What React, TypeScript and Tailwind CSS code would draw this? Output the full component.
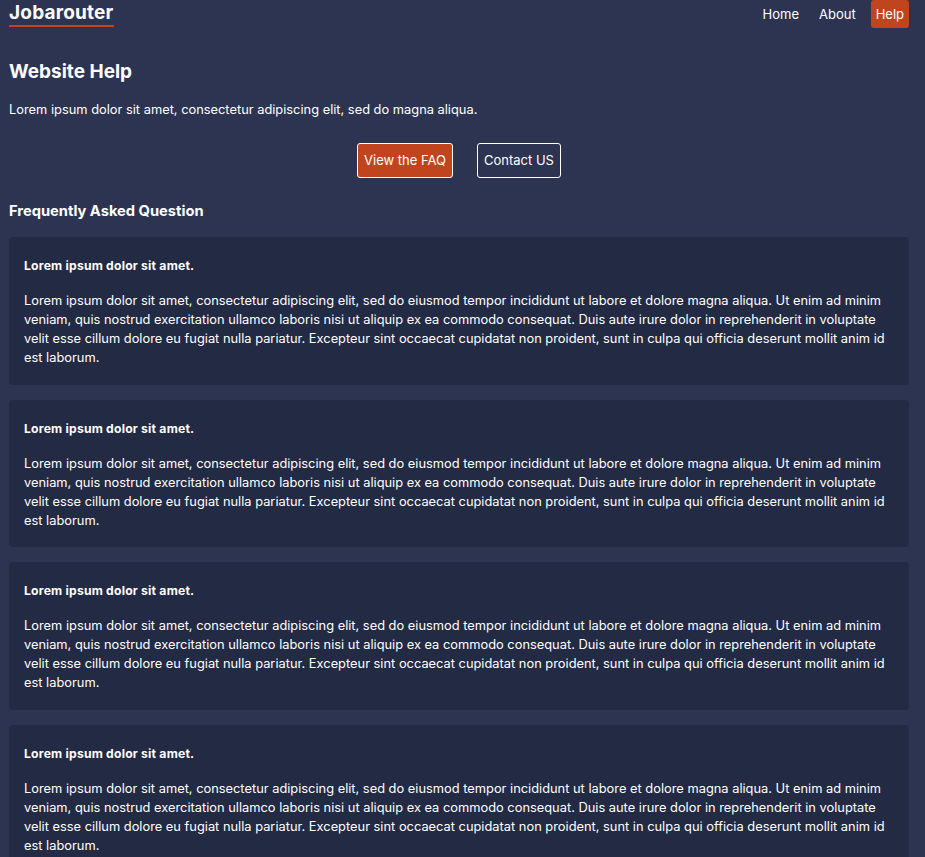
const paragraph = [
  'Lorem ipsum dolor sit amet, consectetur adipiscing elit, sed do eiusmod tempor incididunt ut labore et dolore magna aliqua. Ut enim ad minim',
  'veniam, quis nostrud exercitation ullamco laboris nisi ut aliquip ex ea commodo consequat. Duis aute irure dolor in reprehenderit in voluptate',
  'velit esse cillum dolore eu fugiat nulla pariatur. Excepteur sint occaecat cupidatat non proident, sunt in culpa qui officia deserunt mollit anim id',
  'est laborum.',
];

const faqs = [1, 2, 3, 4];

function FaqCard() {
  return (
    <div className="bg-[#232a43] rounded-[4px] px-[15px] pt-[20px] pb-[17.5px]">
      <h4 className="text-[12.2px] font-bold leading-[18px] tracking-[0.2px] mb-[16px]">Lorem ipsum dolor sit amet.</h4>
      <p className="text-[12.85px] leading-[19px]">
        {paragraph.map((line, i) => (
          <span key={i} className="block whitespace-nowrap">
            {line}
          </span>
        ))}
      </p>
    </div>
  );
}

export default function App() {
  return (
    <div
      className="min-h-screen bg-[#2c3452] text-white pl-[9px] pr-[16px] pb-[20px]"
      style={{ fontFamily: 'Inter, "Noto Sans", sans-serif' }}
    >
      <header className="flex items-start justify-between">
        <div className="pt-[1px]">
          <span className="inline-block text-[19px] font-bold leading-[22px] tracking-[0.2px] border-b-2 border-[#c0451f] pb-[1px]">
            Jobarouter
          </span>
        </div>
        <nav className="flex items-center gap-[10px] text-[13px]">
          <a className="px-[5px] leading-[28px]">Home</a>
          <a className="px-[5px] leading-[28px]">About</a>
          <a className="px-[5px] leading-[28px] bg-[#c0451f] rounded-[3px]">Help</a>
        </nav>
      </header>

      <h1 className="mt-[31px] text-[19px] font-bold leading-[26px]">Website Help</h1>
      <p className="mt-[15px] text-[12.85px] leading-[19px]">
        Lorem ipsum dolor sit amet, consectetur adipiscing elit, sed do magna aliqua.
      </p>

      <div className="flex justify-center gap-[24px] mt-[24px]">
        <button className="h-[35px] px-[6px] text-[13px] bg-[#c0451f] border border-white rounded-[3px]">
          View the FAQ
        </button>
        <button className="h-[35px] px-[6px] text-[13px] border border-white rounded-[3px]">
          Contact US
        </button>
      </div>

      <h3 className="mt-[22px] text-[14.7px] font-bold leading-[22px]">Frequently Asked Question</h3>

      <div className="mt-[15px] flex flex-col gap-[15px]">
        {faqs.map((n) => (
          <FaqCard key={n} />
        ))}
      </div>
    </div>
  );
}
